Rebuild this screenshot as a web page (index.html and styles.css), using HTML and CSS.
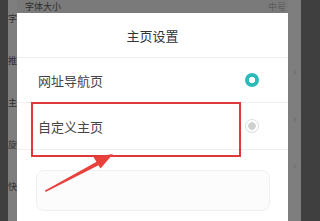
FILE: index.html
```html
<!DOCTYPE html>
<html lang="zh-CN">
<head>
    <meta charset="UTF-8">
    <meta name="viewport" content="width=device-width, initial-scale=1.0">
    <title>主页设置</title>
    <link rel="stylesheet" href="styles.css">
</head>
<body>
    <div class="edge edge-left"></div>
    <div class="peek peek-left">
        <span>字</span>
        <span>推</span>
        <span>主</span>
        <span>旋</span>
        <span>快</span>
    </div>
    <div class="main">
        <div class="top-band">
            <span class="top-label">字体大小</span>
            <span class="top-value">中号</span>
        </div>
        <div class="dialog">
            <div class="dialog-title">主页设置</div>
            <div class="option">
                <span class="option-label">网址导航页</span>
                <span class="radio checked"></span>
            </div>
            <div class="option">
                <span class="option-label">自定义主页</span>
                <span class="radio"></span>
            </div>
            <div class="url-box"></div>

            <!-- annotation drawn over the screenshot -->
            <div class="mark-box"></div>
            <svg class="mark-arrow" width="70" height="42" viewBox="0 0 70 42">
                <polygon points="0,38.5 53,9 55,12.5 0.6,40" fill="#e8413b"/>
                <polygon points="68,2 48.5,5 55.5,16.5" fill="#e8413b"/>
            </svg>
        </div>
    </div>
    <div class="peek peek-right">
        <span>›</span>
        <span>›</span>
        <span>›</span>
    </div>
    <div class="edge edge-right"></div>
</body>
</html>
```

FILE: styles.css
```css
body {
    margin: 0;
    width: 320px;
    height: 221px;
    overflow: hidden;
    display: flex;
    font-family: "Noto Sans CJK SC", "Noto Sans", sans-serif;
    background-color: #7c7c7c;
}

.edge {
    background-color: #3f3f3f;
    flex-shrink: 0;
}

.edge-left {
    width: 8px;
}

.edge-right {
    width: 19px;
}

.peek {
    flex-shrink: 0;
    background-color: #7e7e7e;
    display: flex;
    flex-direction: column;
    color: #2e2e2e;
    font-size: 9px;
}

.peek-left {
    width: 9px;
    padding-top: 14px;
    gap: 32px;
    align-items: center;
}

.peek-left span {
    line-height: 10px;
}

.peek-right {
    width: 13px;
    padding-top: 62px;
    gap: 30px;
    align-items: center;
    color: #6a6a6a;
    font-size: 12px;
}

.main {
    flex: 1;
    display: flex;
    flex-direction: column;
    min-width: 0;
}

.top-band {
    height: 13px;
    flex-shrink: 0;
    display: flex;
    justify-content: space-between;
    align-items: center;
    background-color: #7a7a7a;
    color: #2c2c2c;
    font-size: 9px;
    line-height: 10px;
}

.top-label {
    margin-left: 8px;
}

.top-value {
    margin-right: 2px;
    color: #5a5a5a;
}

.dialog {
    flex: 1;
    background-color: #fff;
    position: relative;
}

.dialog-title {
    height: 44px;
    line-height: 45px;
    text-align: center;
    font-size: 13px;
    color: #333;
    border-bottom: 1px solid #efefef;
}

.option {
    height: 44px;
    padding: 0 29px 0 21px;
    display: flex;
    align-items: center;
    justify-content: space-between;
    border-bottom: 1px solid #efefef;
}

.option + .option {
    height: 46px;
}

.option-label {
    font-size: 13px;
    color: #444;
}

.radio {
    width: 12px;
    height: 12px;
    border-radius: 50%;
    border: 1px solid #dcdcdc;
    background: radial-gradient(circle, #cfcfcf 0 3.5px, #fff 4px);
}

.radio.checked {
    width: 14px;
    height: 14px;
    border: none;
    background: radial-gradient(circle, #fff 0 3px, #2dbabb 3.5px);
}

.url-box {
    margin: 20px 18px 0 19px;
    height: 39px;
    border: 1px solid #f0f0f0;
    border-radius: 8px;
    background-color: #fcfcfc;
}

.mark-box {
    position: absolute;
    left: 14px;
    top: 89px;
    width: 206px;
    height: 51px;
    border: 2px solid #e0383a;
}

.mark-arrow {
    position: absolute;
    left: 28px;
    top: 139px;
    overflow: visible;
}
```
